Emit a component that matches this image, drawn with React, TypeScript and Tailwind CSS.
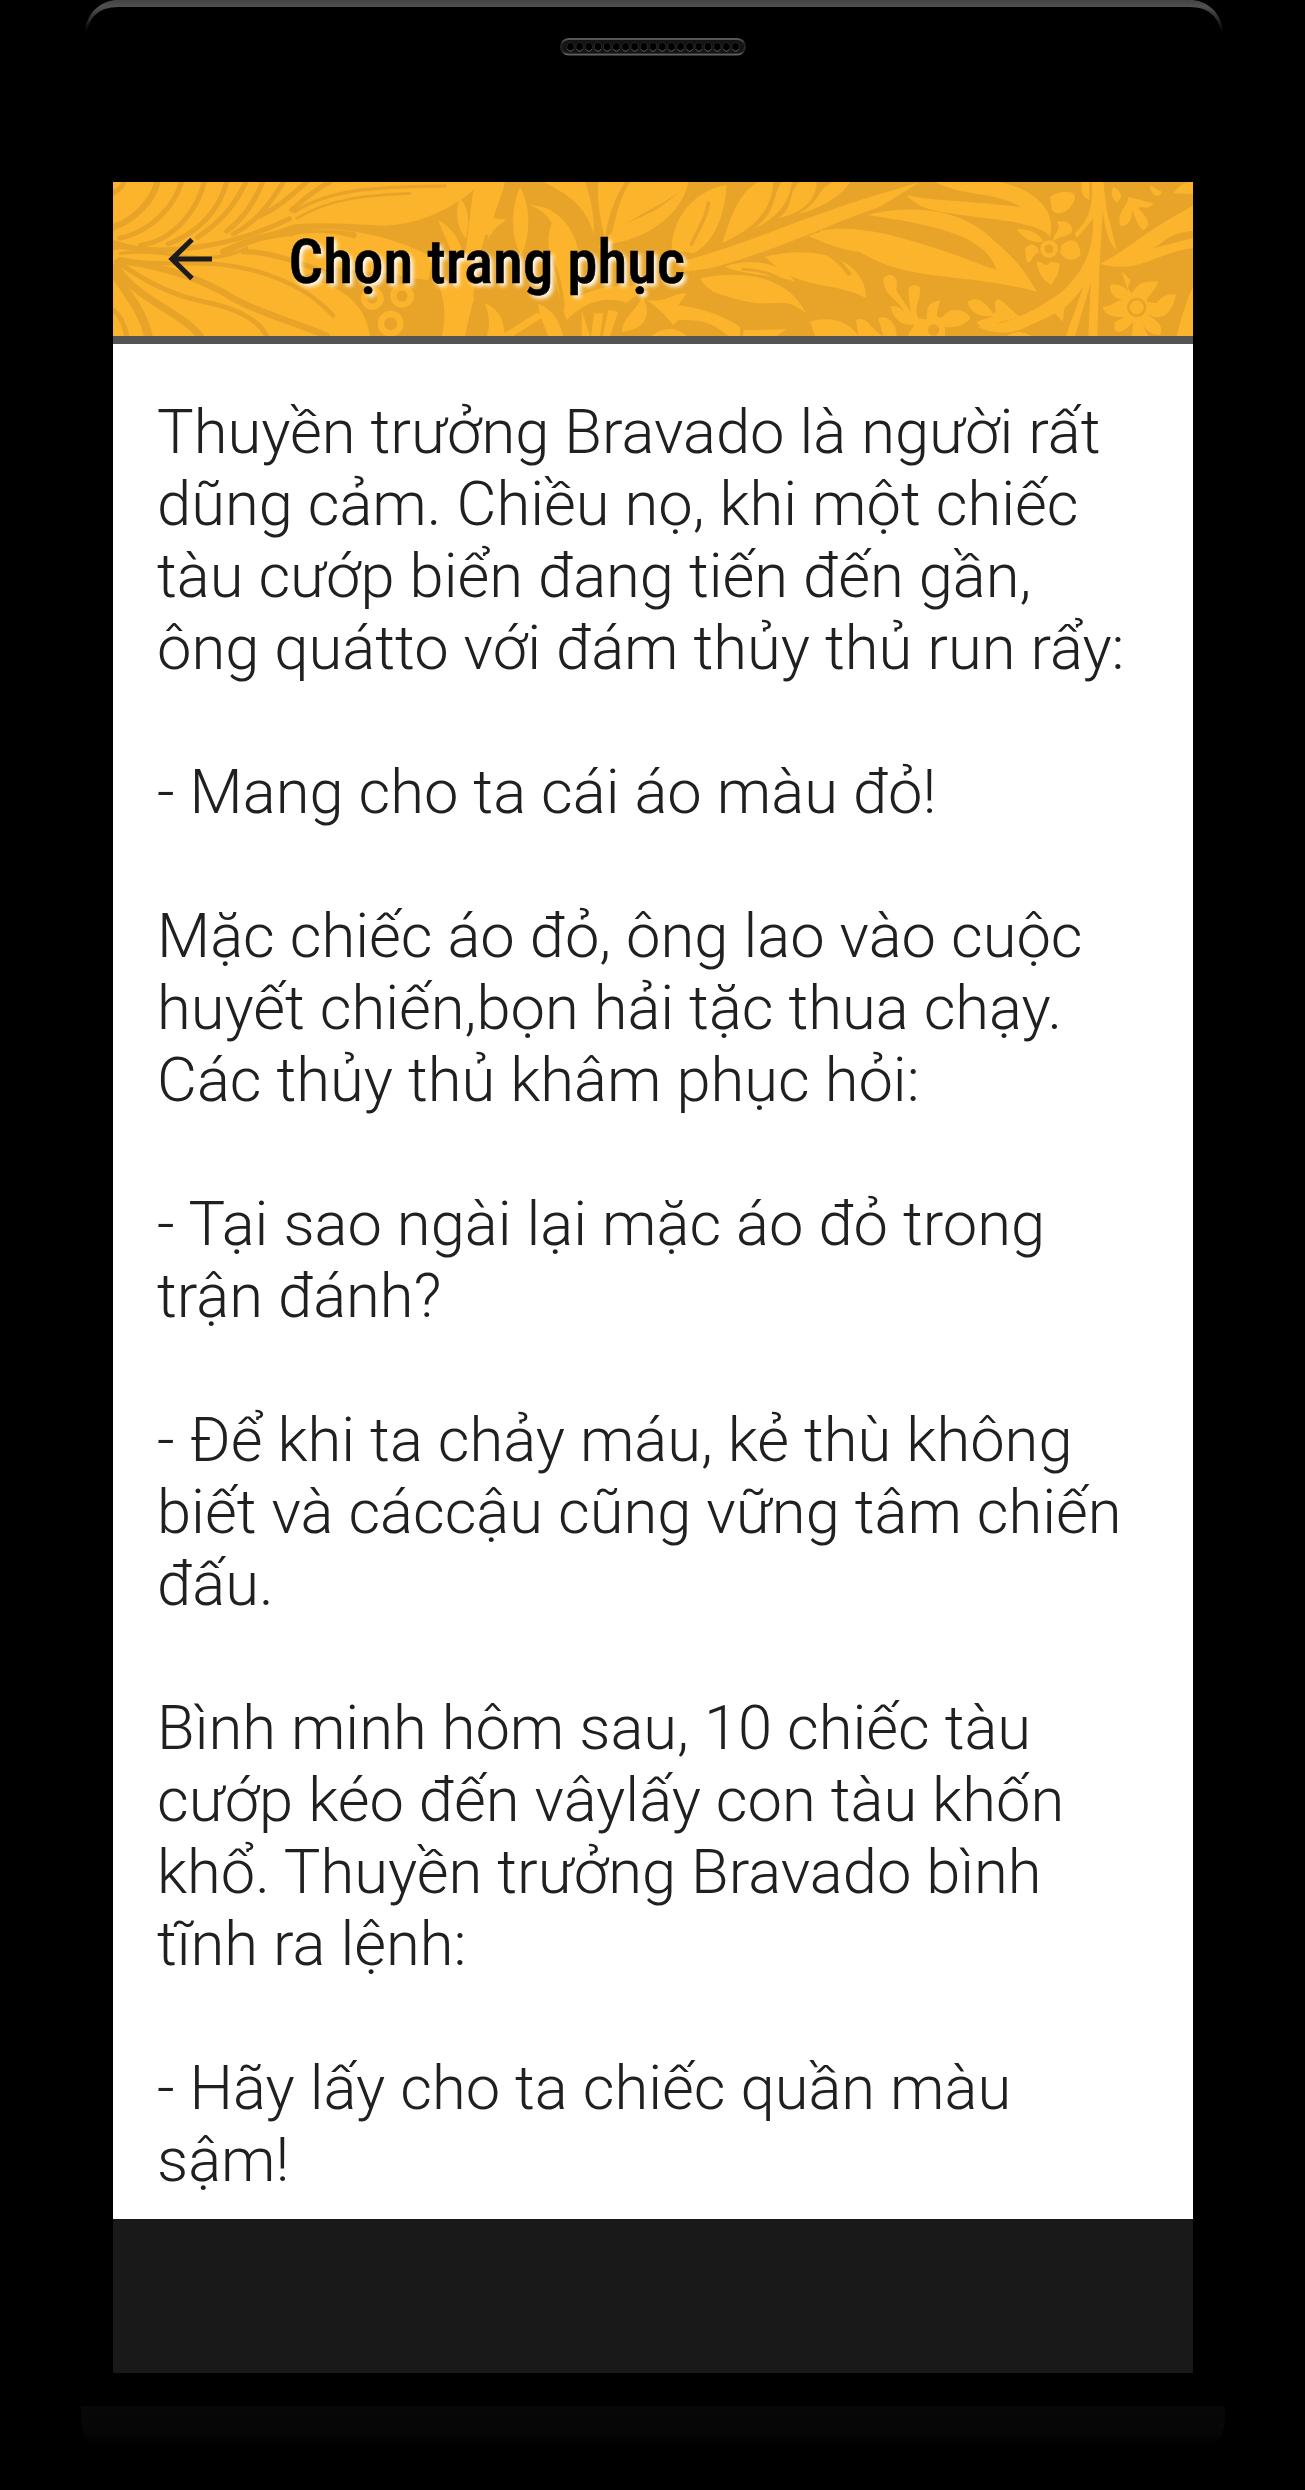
const paragraphs = [
  [
    'Thuyền trưởng Bravado là người rất',
    'dũng cảm. Chiều nọ, khi một chiếc',
    'tàu cướp biển đang tiến đến gần,',
    'ông quátto với đám thủy thủ run rẩy:',
  ],
  ['- Mang cho ta cái áo màu đỏ!'],
  [
    'Mặc chiếc áo đỏ, ông lao vào cuộc',
    'huyết chiến,bọn hải tặc thua chạy.',
    'Các thủy thủ khâm phục hỏi:',
  ],
  ['- Tại sao ngài lại mặc áo đỏ trong', 'trận đánh?'],
  [
    '- Để khi ta chảy máu, kẻ thù không',
    'biết và cáccậu cũng vững tâm chiến',
    'đấu.',
  ],
  [
    'Bình minh hôm sau, 10 chiếc tàu',
    'cướp kéo đến vâylấy con tàu khốn',
    'khổ. Thuyền trưởng Bravado bình',
    'tĩnh ra lệnh:',
  ],
  ['- Hãy lấy cho ta chiếc quần màu', 'sậm!'],
];

const LIGHT = '#fcb42c';
const DARK = '#e8a428';

function FloralBackground() {
  return (
    <svg
      className="absolute inset-0 h-full w-full"
      viewBox="0 0 3240 462"
      preserveAspectRatio="none"
      fill={LIGHT}
    >
      <rect width="3240" height="462" fill={DARK} />

      {/* Left fronds */}
      <g transform="translate(-39 -36)">
        <path d="M39 36H1145C1075 110 960 165 850 167C750 160 660 157 585 163C500 190 430 222 340 240C220 250 120 235 39 210Z" />
        <path d="M39 240C160 225 320 250 430 215C570 165 780 150 1000 262L985 330C900 320 850 300 700 290L600 320C760 350 800 430 810 498H39Z" />
        <g fill="none" stroke={DARK} strokeWidth="15" strokeLinecap="round">
          <path d="M39 70C60 60 67 48 72 36" />
          <path d="M39 172C105 150 160 90 172 36" strokeWidth="19" />
          <path d="M60 205C150 185 220 115 245 36" />
          <path d="M122 226C230 210 295 110 313 36" />
          <path d="M205 222C310 180 360 110 380 36" />
          <path d="M292 202C380 145 410 90 438 36" />
          <path d="M380 184C440 140 470 80 488 36" />
          <path d="M400 192C480 150 520 85 550 36" />
          <path d="M480 138C540 110 580 70 620 36" />
          <path d="M575 120C610 90 640 60 690 36" />
          <path d="M585 125C700 50 870 50 1035 48" strokeWidth="10" />
          <path d="M590 145C690 85 800 75 930 70" strokeWidth="8" />
          <path d="M48 225C190 260 400 230 568 146" />
          <path d="M60 250C220 230 300 300 440 235" strokeWidth="10" />
          <path d="M370 245C510 180 590 180 760 195" strokeWidth="20" />
          <path d="M430 245C520 245 600 280 740 330" strokeWidth="16" />
          <path d="M60 268C200 300 330 250 520 320C600 350 650 385 700 437" strokeWidth="13" />
          <path d="M60 272C210 290 330 340 400 385C500 440 600 460 680 498" strokeWidth="20" />
          <path d="M50 275C120 320 190 370 310 395C410 415 475 450 500 498" />
          <path d="M48 290C110 390 250 430 300 498" strokeWidth="22" />
          <path d="M43 310C95 390 130 430 145 498" strokeWidth="26" />
          <path d="M39 420C65 440 75 470 80 498" />
        </g>
        <path d="M580 195C670 180 760 190 850 245L980 330C870 300 790 315 690 285Z" />
        <g fill="none" stroke={LIGHT} strokeWidth="19">
          <circle cx="817" cy="385" r="25" />
          <circle cx="906" cy="378" r="26" />
          <circle cx="872" cy="461" r="29" />
        </g>
      </g>

      {/* Central stems */}
      <g transform="translate(1101 -36)">
        <path d="M-125 150C-75 180 -65 210 -45 260C-35 190 -25 80 -15 36H75C65 80 50 110 40 145L80 150C30 180 20 210 10 260C0 340 -20 380 -45 498H-115C-95 420 -115 350 -145 310C-105 320 -90 340 -78 360C-65 260 -105 210 -125 150Z" />
        <path d="M-60 85C-35 110 -30 150 -42 205C-68 175 -77 130 -60 85ZM120 50C155 110 150 200 125 255C90 210 93 110 120 50Z" />
        <path d="M148 105C225 105 290 170 300 270C310 350 280 410 255 440C215 290 190 230 215 160C200 130 180 118 148 105Z" />
        <path d="M190 36C250 65 320 105 342 195C342 140 335 90 315 36ZM355 36H435C405 85 385 135 375 205C362 155 350 95 355 36ZM450 36H625C570 105 490 115 395 195C410 120 425 75 450 36Z" />
        <path d="M355 235C420 130 510 170 625 36C610 120 520 200 400 220ZM575 240C575 130 660 55 740 45C735 140 700 220 640 250Z" />
        <g fill="none" stroke={DARK} strokeWidth="11" strokeLinecap="round">
          <path d="M635 222C655 175 680 145 685 100" />
          <path d="M170 185C230 270 245 350 250 430" />
          <path d="M20 200C5 250 -5 310 -15 380" />
        </g>
        <path d="M250 420C310 350 410 340 505 350L440 398C370 375 310 400 260 450ZM15 400C70 425 70 465 75 498H20C32 465 27 435 15 400ZM60 498L170 428L190 440L100 498ZM175 400C235 430 238 465 250 498H205C190 460 175 430 175 400Z" />
        <path d="M305 420L330 498H305ZM342 430H370L360 498H333ZM385 420L415 425L390 498H368ZM488 380C520 440 490 480 425 485C430 440 465 425 488 380Z" />
        <path d="M500 390C560 400 570 370 620 370L595 405C670 415 735 440 780 470V498H745C690 450 650 450 595 450L580 465C550 430 530 410 500 390ZM515 498C550 470 590 470 620 498ZM790 480L920 478L890 498H790Z" />
      </g>

      {/* Branch with broad leaves */}
      <g transform="translate(1101 -36)">
        <path d="M610 305L620 270C820 215 970 140 1200 72L1320 36L1200 110C1030 170 880 245 690 295Z" />
        <path d="M728 218C760 110 790 60 835 36H880C875 120 825 175 728 218ZM820 177C890 130 875 80 905 36H935C930 90 900 140 820 177ZM895 145C945 110 920 70 960 36H1010C1010 90 965 130 895 145ZM955 132C1030 90 1000 65 1060 36H1110C1090 70 1040 110 955 132Z" />
        <path d="M660 325C770 300 920 310 978 430C890 360 900 440 700 365C680 352 668 340 660 325Z" />
        <path d="M735 290C810 260 910 280 945 335C870 310 790 315 735 290ZM855 260C1010 220 1160 270 1158 385C1080 340 980 355 900 300Z" />
        <path d="M985 198C1060 165 1180 190 1240 225C1160 270 1070 235 985 198Z" />
        <path d="M945 225C1030 230 1070 260 1110 315" fill="none" stroke={DARK} strokeWidth="13" />
        <path d="M785 298C850 300 910 320 940 365" fill="none" stroke={DARK} strokeWidth="9" />
        <path d="M990 455C1060 435 1110 460 1135 498H1005Z" />
      </g>

      {/* Right side leaves and blossoms */}
      <g transform="translate(2121 -36)">
        <path d="M0 182C100 165 200 190 300 220C400 250 470 280 530 300C500 210 390 170 140 135C310 95 445 130 530 220C590 270 620 310 650 365C430 305 260 340 110 240C70 220 30 215 0 200Z" />
        <path d="M345 36H540C650 60 710 125 690 200C650 150 500 150 390 130C320 120 285 105 260 75C340 95 440 90 605 112C530 65 430 80 345 36Z" />
        <path d="M815 36H850L860 120L890 240C860 215 855 160 848 125L838 300L832 498H805L812 340L765 498H738L790 350C740 420 710 430 620 470C550 505 500 480 470 470C590 460 660 410 720 370C800 300 820 230 820 145L770 205L765 190C810 150 820 100 815 36Z" />
        <path d="M840 282C930 235 980 180 1119 108V182C1050 190 1040 210 1000 235L1119 205V235C1010 245 960 315 840 282ZM1119 350V498H1070C1085 440 1100 390 1119 350Z" />
        <path d="M690 80C730 55 770 65 765 85C755 120 720 145 695 120ZM785 36H808V90C780 80 785 55 785 36ZM880 50C900 60 915 80 890 98C870 80 875 60 880 50ZM990 45L1025 65C1020 85 990 80 990 45ZM1060 70C1080 40 1100 36 1119 36V72Z" />
        <path d="M900 168C890 120 925 110 925 80L1000 100C985 125 960 105 955 115C985 145 995 165 970 182C945 160 945 130 935 120C940 145 925 170 900 168Z" />
        <path d="M590 178C635 175 660 195 670 215C635 220 610 205 590 178ZM710 155C745 150 760 165 755 188C735 200 705 205 700 215C695 190 730 180 710 155ZM725 225C760 195 780 215 782 255C755 282 735 265 720 250ZM650 275C670 270 675 300 690 275L718 280C720 315 700 330 695 345C665 330 655 305 650 275ZM615 235C640 210 660 235 655 250C640 245 635 285 620 275Z" />
        <circle cx="687" cy="237" r="20" fill="none" stroke={LIGHT} strokeWidth="13" />
        <path d="M190 325C215 300 240 325 228 360L272 425L265 365C260 340 305 340 300 360C300 400 280 405 295 445L320 448C320 390 340 400 360 390L350 435C365 460 375 420 400 420C440 420 445 435 452 445C430 470 395 475 375 470V498H265C270 475 285 475 280 463C240 470 220 440 210 410C235 400 250 425 255 430C230 380 190 380 190 325Z" />
        <circle cx="341" cy="480" r="17" fill={DARK} />
        <path d="M108 450C145 435 150 480 190 498H115ZM175 445C205 430 230 465 230 498H190ZM0 452C55 460 80 480 90 498H0ZM443 395C480 375 500 405 520 430C540 420 510 400 535 388C555 395 575 425 600 440C560 455 530 450 525 472C500 480 470 465 470 455L520 438C480 440 450 430 443 395ZM560 498C580 485 605 480 635 498Z" />
        <path d="M905 305L932 330C930 345 915 348 935 370C960 330 985 335 1015 335C1005 365 980 380 980 395L1010 400C1030 370 1050 375 1068 372C1060 420 1035 450 1000 440L980 430C1000 450 1035 460 1020 495C990 495 975 475 965 458L985 498H935L940 455C900 500 875 490 885 455L915 440C875 445 850 430 848 410C880 410 885 390 910 390C880 385 870 370 870 345C900 340 915 350 925 368Z" />
        <circle cx="950" cy="412" r="25" fill="none" stroke={DARK} strokeWidth="8" />
        <path d="M705 400L735 405L728 455L705 430Z" />
      </g>
    </svg>
  );
}

function ArrowBack() {
  return (
    <svg className="h-[44px] w-[44px]" viewBox="0 0 44 44" fill="none" stroke="#1c1c1c" strokeWidth="5.2">
      <path d="M24 2.5L4 22L24 41.5M4 22H44" />
    </svg>
  );
}

function Speaker() {
  return (
    <svg className="h-[18px] w-[186px]" viewBox="0 0 186 18" fill="none">
      <defs>
        <linearGradient id="grille" x1="0" y1="0" x2="0" y2="1">
          <stop offset="0" stopColor="#5a5a5a" />
          <stop offset="0.3" stopColor="#242424" />
          <stop offset="0.8" stopColor="#252525" />
          <stop offset="1" stopColor="#606060" />
        </linearGradient>
      </defs>
      <rect x="1" y="1" width="184" height="15.5" rx="7.7" fill="#141414" stroke="url(#grille)" strokeWidth="2" />
      {Array.from({ length: 19 }, (_, i) => (
        <g key={i}>
          <ellipse cx={10.5 + i * 9.17} cy="9" rx="3.7" ry="4.4" fill="#000" stroke="#262626" />
          <path d={`M${7.3 + i * 9.17} 11q3.2 4.5 6.4 0`} stroke="#555" />
        </g>
      ))}
    </svg>
  );
}

function BezelTop() {
  return (
    <svg className="ml-[2px] h-[38px] w-[1138px]" viewBox="0 0 1140 38" preserveAspectRatio="none">
      <defs>
        <linearGradient id="rim" x1="0" y1="0" x2="0" y2="38" gradientUnits="userSpaceOnUse">
          <stop offset="0" stopColor="#434343" />
          <stop offset="0.17" stopColor="#505050" />
          <stop offset="0.4" stopColor="#383838" />
          <stop offset="0.85" stopColor="#000" />
        </linearGradient>
      </defs>
      <path d="M0 38C-1 14 14 2 30 0H1110C1126 2 1141 14 1140 38C1136 18 1128 7 1106 7H34C12 7 4 18 0 38Z" fill="url(#rim)" />
    </svg>
  );
}

export default function App() {
  return (
    <div className="flex h-[2490px] w-[1305px] flex-col items-center bg-black font-[Roboto,sans-serif]">
      <div className="flex h-[182px] flex-col items-center">
        <BezelTop />
        <Speaker />
      </div>

      <main className="flex h-[2191px] w-[1080px] flex-col bg-[#191919]">
        <header className="relative flex h-[162px] shrink-0 items-center border-b-8 border-[#545454]">
          <FloralBackground />
          <button type="button" aria-label="Back" className="relative ml-[55px]">
            <ArrowBack />
          </button>
          <h1 className="relative ml-[77px] whitespace-nowrap pt-[6px] font-['Roboto_Condensed',Roboto,sans-serif] text-[61px] font-medium leading-[72px] text-black [-webkit-text-stroke:0.6px_#000] [text-shadow:3px_3px_4px_#fff]">
            Chọn trang phục
          </h1>
        </header>

        <article className="flex h-[1875px] flex-col gap-[72px] bg-white px-[44.5px] pt-[52px] text-[61.44px] font-light leading-[72px] text-[#202020]">
          {paragraphs.map((lines, i) => (
            <p key={i}>
              {lines.map(line => (
                <span key={line} className="block whitespace-nowrap">{line}</span>
              ))}
            </p>
          ))}
        </article>
      </main>

      <div className="mt-[33px] h-[53px] w-[1144px] rounded-b-[40px] bg-linear-to-b from-[#070707] via-[#060606] to-black" />
    </div>
  );
}
